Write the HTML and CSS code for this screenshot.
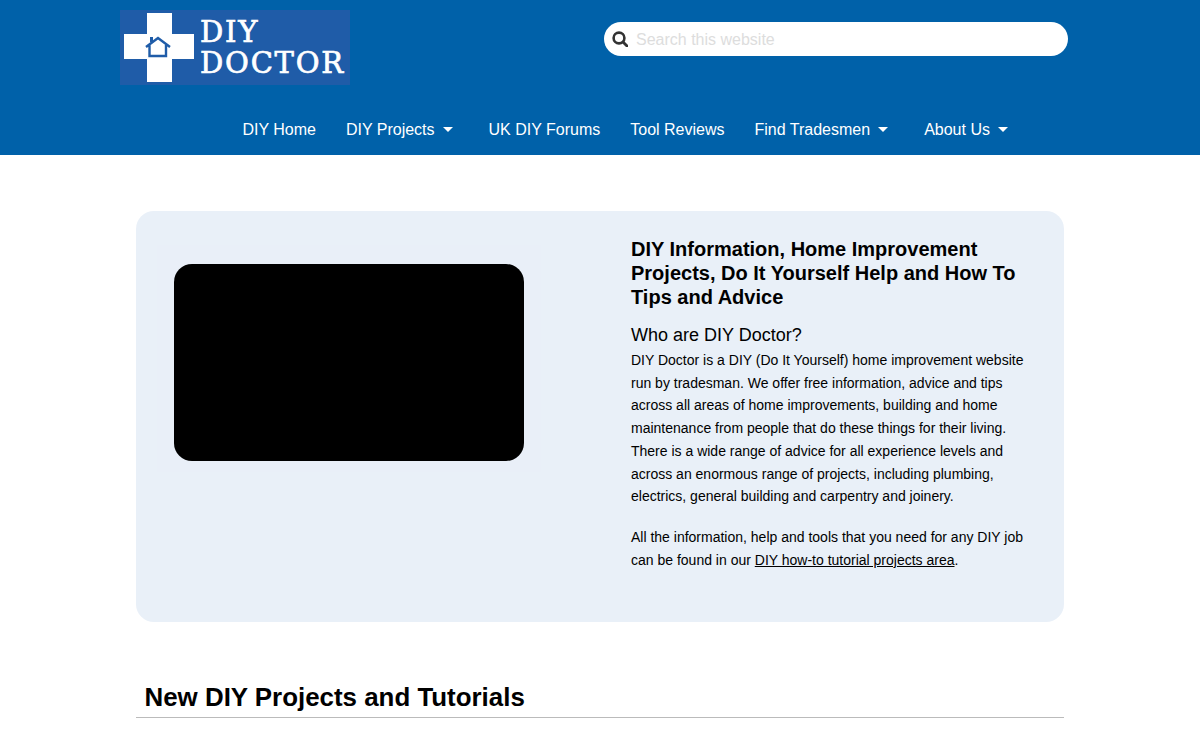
FILE: index.html
```html
<!DOCTYPE html>
<html lang="en">
<head>
    <meta charset="UTF-8">
    <title>DIY Doctor</title>
    <link rel="stylesheet" href="styles.css">
</head>
<body>
    <header class="site-header">
        <div class="header-top">
            <a class="logo" href="#">
                <svg class="logo-cross" width="70" height="69" viewBox="0 0 70 69">
                    <path fill="#fff" d="M23 0h25v21h22v25H48v23H23V46H0V21h23z"/>
                    <path fill="none" stroke="#1f5ca8" stroke-width="2.4" d="M22 34l12-9 12 9M25.500 32v11h16.500V32"/>
                    <path fill="#1f5ca8" d="M26 24h3v5h-3z"/>
                </svg>
                <span class="logo-text">DIY<br>DOCTOR</span>
            </a>
            <form class="search">
                <svg class="search-icon" width="16" height="16" viewBox="0 0 16 16">
                    <circle cx="7" cy="7" r="5.400" fill="none" stroke="#333" stroke-width="2.600"/>
                    <path d="M11 11l4 4" stroke="#333" stroke-width="2.800" stroke-linecap="round"/>
                </svg>
                <input type="text" placeholder="Search this website">
            </form>
        </div>
        <nav class="main-nav">
            <a href="#">DIY Home</a>
            <a href="#" class="has-sub">DIY Projects</a>
            <a href="#">UK DIY Forums</a>
            <a href="#">Tool Reviews</a>
            <a href="#" class="has-sub">Find Tradesmen</a>
            <a href="#" class="has-sub">About Us</a>
        </nav>
    </header>

    <main class="content">
        <section class="intro">
            <div class="video-wrap">
                <div class="video"></div>
            </div>
            <div class="intro-text">
                <h1>DIY Information, Home Improvement Projects, Do It Yourself Help and How To Tips and Advice</h1>
                <h2>Who are DIY Doctor?</h2>
                <p>DIY Doctor is a DIY (Do It Yourself) home improvement website run by tradesman. We offer free information, advice and tips across all areas of home improvements, building and home maintenance from people that do these things for their living. There is a wide range of advice for all experience levels and across an enormous range of projects, including plumbing, electrics, general building and carpentry and joinery.</p>
                <p>All the information, help and tools that you need for any DIY job can be found in our <a href="#">DIY how-to tutorial projects area</a>.</p>
            </div>
        </section>
        <h2 class="section-title">New DIY Projects and Tutorials</h2>
    </main>
</body>
</html>
```

FILE: styles.css
```css
body {
    margin: 0;
    font-family: "Liberation Sans", Arial, sans-serif;
    color: #000;
    background: #fff;
}
.site-header {
    background: #0061a9;
    height: 155px;
}
.header-top {
    display: flex;
    justify-content: space-between;
    padding: 10px 132px 0 120px;
}
.logo {
    display: flex;
    align-items: center;
    gap: 6px;
    box-sizing: border-box;
    width: 230px;
    height: 75px;
    padding-left: 4px;
    background: #1f5ca8;
    color: #fff;
    text-decoration: none;
}
.logo-text {
    font-family: "DejaVu Serif", serif;
    font-size: 29px;
    line-height: 31px;
    letter-spacing: 1.800px;
    -webkit-text-stroke: 0.7px #fff;
}
.search {
    display: flex;
    align-items: center;
    gap: 8px;
    width: 464px;
    height: 34px;
    box-sizing: border-box;
    margin-top: 12px;
    padding-left: 9px;
    padding-right: 17px;
    background: #fff;
    border-radius: 17px;
}
.search-icon {
    flex: none;
    margin-left: -1px;
}
.search input {
    flex: 1;
    min-width: 0;
    border: none;
    outline: none;
    padding: 2px 0 0;
    font-family: inherit;
    font-size: 16px;
}
.search input::placeholder {
    color: #ddd;
}
.main-nav {
    display: flex;
    gap: 30px;
    padding: 34px 0 0 242.400px;
    font-size: 16px;
    line-height: 22px;
}
.main-nav a {
    color: #fff;
    text-decoration: none;
}
.main-nav .has-sub::after {
    content: "";
    display: inline-block;
    margin: 0 6px 0 8px;
    vertical-align: 3px;
    border: 5px solid transparent;
    border-top-color: #fff;
    border-bottom-width: 0;
}
.content {
    width: 928px;
    margin: 56px auto 0;
}
.intro {
    display: flex;
    align-items: flex-start;
    height: 411px;
    box-sizing: border-box;
    padding: 26px 40px 0 21px;
    background: #e9f0f8;
    border-radius: 18px;
}
.video-wrap {
    flex: none;
    width: 350px;
    margin: 8px 90px 0 0;
    padding: 19px 17px 11px;
    background: #e9eff8;
}
.video {
    height: 197px;
    background: #000;
    border-radius: 18px;
}
.intro-text {
    flex: 1;
}
.intro-text h1 {
    margin: 0 0 14px;
    font-size: 20px;
    line-height: 24px;
}
.intro-text h2 {
    margin: 0 0 2px;
    font-size: 18px;
    font-weight: normal;
    line-height: 24px;
}
.intro-text p {
    margin: 0 0 18px;
    font-size: 14px;
    line-height: 22.700px;
}
.intro-text a {
    color: #000;
}
.section-title {
    margin: 60px 0 0;
    padding: 0 0 5px 8.500px;
    font-size: 25.900px;
    line-height: 30px;
    border-bottom: 1px solid #bbb;
}
```
